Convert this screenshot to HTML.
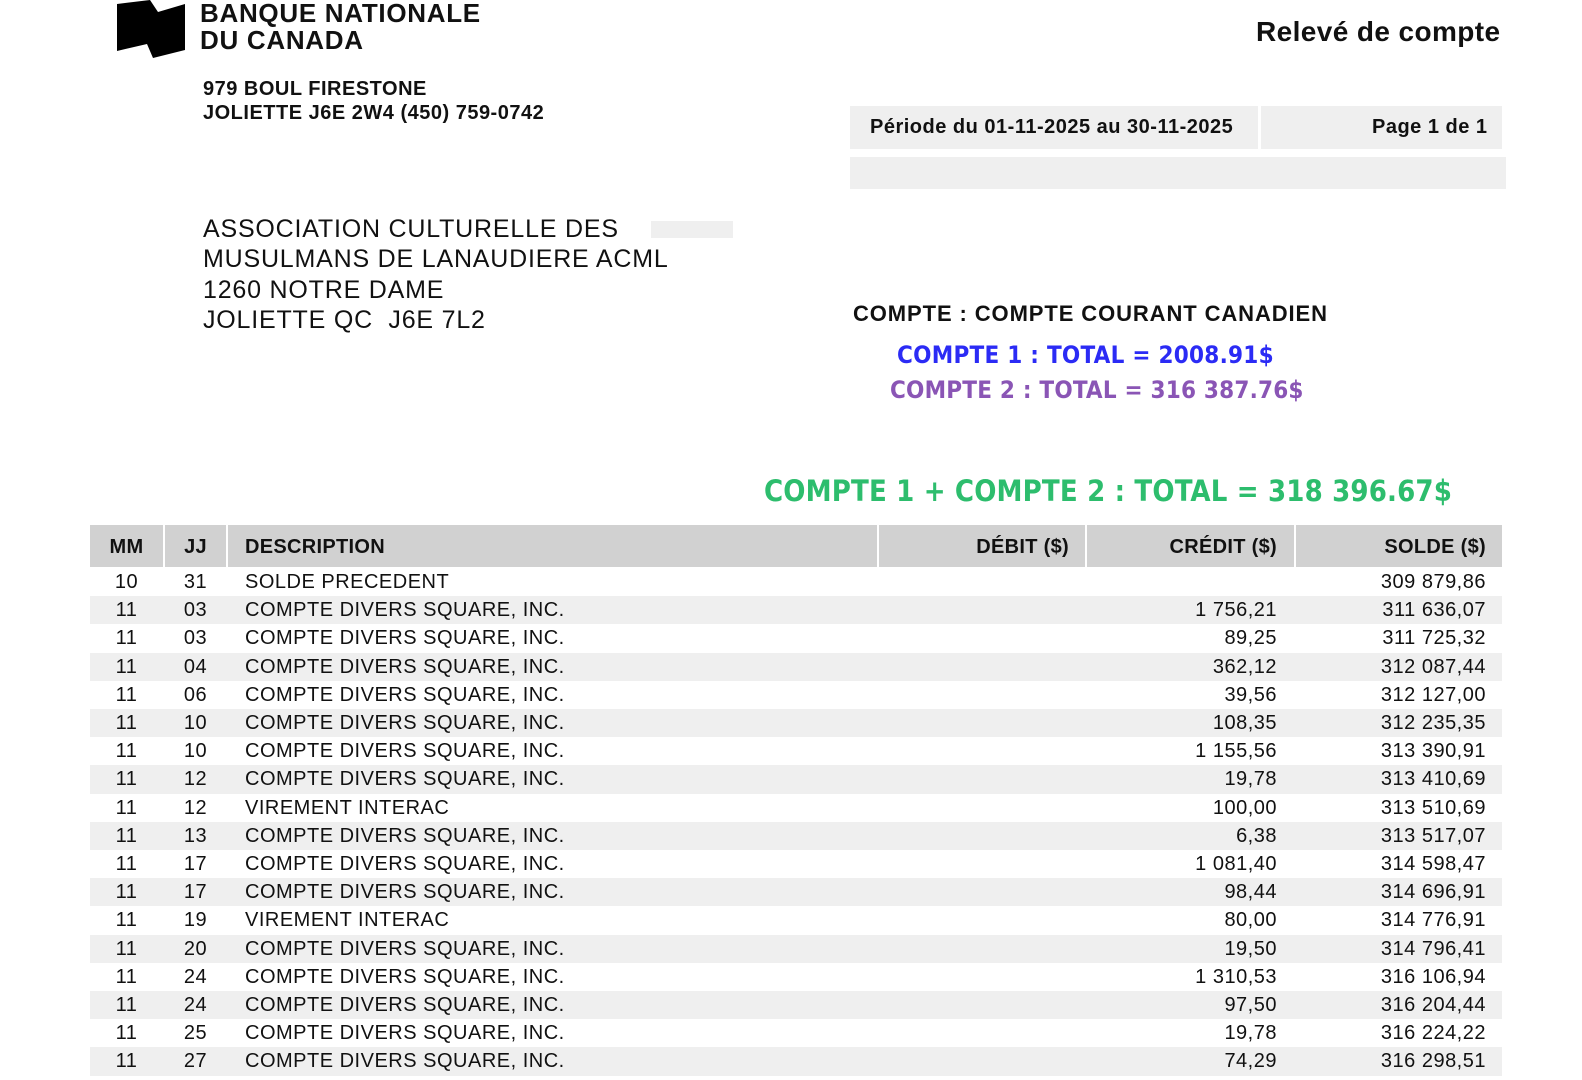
<!DOCTYPE html>
<html><head><meta charset="utf-8"><style>
body{margin:0;width:1582px;height:1080px;overflow:hidden;background:#fff;font-family:"Liberation Sans",Arial,sans-serif;color:#111;position:relative}
.a{position:absolute;white-space:nowrap}
.b{font-weight:bold}
.row{position:absolute;left:90px;width:1412px;height:28.2px;font-size:20px;line-height:28px;letter-spacing:0.5px}
.row span{position:absolute}
.g{background:#efefef}
.mm{left:0;width:73px;text-align:center}
.jj{left:75px;width:61px;text-align:center}
.ds{left:155px}
.cr{right:225px}
.so{right:16px}
.hd{position:absolute;top:525px;height:42px;background:#d1d1d1;font-weight:bold;font-size:20px;line-height:44px;letter-spacing:0.3px}
.tot{font-family:"DejaVu Sans Condensed","DejaVu Sans",sans-serif;font-weight:bold}
</style></head><body>
<svg class="a" style="left:0;top:0" width="200" height="70"><polygon points="117,4 150,0 158,12 185,4 185,50 153,58 147,44 117,51" fill="#000"/></svg>
<div class="a b" style="left:200px;top:0px;font-size:26px;line-height:27px;letter-spacing:0.7px">BANQUE NATIONALE<br>DU CANADA</div>
<div class="a b" style="left:203px;top:77px;font-size:20px;line-height:24px;letter-spacing:0.5px">979 BOUL FIRESTONE<br>JOLIETTE J6E 2W4 (450) 759-0742</div>
<div class="a b" style="left:1256px;top:16px;font-size:28px;letter-spacing:0.4px">Relevé de compte</div>
<div class="a" style="left:850px;top:106px;width:408px;height:43px;background:#efefef"></div>
<div class="a" style="left:1261px;top:106px;width:241px;height:43px;background:#efefef"></div>
<div class="a b" style="left:870px;top:116px;font-size:20px;letter-spacing:0.5px">Période du 01-11-2025 au 30-11-2025</div>
<div class="a b" style="left:1372px;top:116px;font-size:20px;letter-spacing:0.5px">Page 1 de 1</div>
<div class="a" style="left:850px;top:157px;width:656px;height:32px;background:#efefef"></div>
<div class="a" style="left:651px;top:221px;width:82px;height:17px;background:#efefef"></div>
<div class="a" style="left:203px;top:214px;font-size:25px;line-height:30.3px;letter-spacing:0.8px">ASSOCIATION CULTURELLE DES<br>MUSULMANS DE LANAUDIERE ACML<br>1260 NOTRE DAME<br>JOLIETTE QC&nbsp; J6E 7L2</div>
<div class="a b" style="left:853px;top:301px;font-size:22px;letter-spacing:0.9px">COMPTE : COMPTE COURANT CANADIEN</div>
<div class="a tot" style="left:897px;top:341px;font-size:24px;color:#2b2bf5;letter-spacing:0.25px">COMPTE 1 : TOTAL = 2008.91$</div>
<div class="a tot" style="left:890px;top:376px;font-size:24px;color:#8a55b5;letter-spacing:0.2px">COMPTE 2 : TOTAL = 316 387.76$</div>
<div class="a tot" style="left:764px;top:474px;font-size:29px;color:#2dbd6d;letter-spacing:0.15px">COMPTE 1 + COMPTE 2 : TOTAL = 318 396.67$</div>
<div class="hd" style="left:90px;width:73px;text-align:center">MM</div>
<div class="hd" style="left:165px;width:61px;text-align:center">JJ</div>
<div class="hd" style="left:228px;width:649px"><span style="padding-left:17px">DESCRIPTION</span></div>
<div class="hd" style="left:879px;width:206px;text-align:right"><span style="padding-right:16px">DÉBIT ($)</span></div>
<div class="hd" style="left:1087px;width:207px;text-align:right"><span style="padding-right:17px">CRÉDIT ($)</span></div>
<div class="hd" style="left:1296px;width:206px;text-align:right"><span style="padding-right:16px">SOLDE ($)</span></div>
<div class="row" style="top:568px"><span class="mm">10</span><span class="jj">31</span><span class="ds">SOLDE PRECEDENT</span><span class="so">309 879,86</span></div>
<div class="row g" style="top:596.2px"><span class="mm">11</span><span class="jj">03</span><span class="ds">COMPTE DIVERS SQUARE, INC.</span><span class="cr">1 756,21</span><span class="so">311 636,07</span></div>
<div class="row" style="top:624.4px"><span class="mm">11</span><span class="jj">03</span><span class="ds">COMPTE DIVERS SQUARE, INC.</span><span class="cr">89,25</span><span class="so">311 725,32</span></div>
<div class="row g" style="top:652.6px"><span class="mm">11</span><span class="jj">04</span><span class="ds">COMPTE DIVERS SQUARE, INC.</span><span class="cr">362,12</span><span class="so">312 087,44</span></div>
<div class="row" style="top:680.8px"><span class="mm">11</span><span class="jj">06</span><span class="ds">COMPTE DIVERS SQUARE, INC.</span><span class="cr">39,56</span><span class="so">312 127,00</span></div>
<div class="row g" style="top:709px"><span class="mm">11</span><span class="jj">10</span><span class="ds">COMPTE DIVERS SQUARE, INC.</span><span class="cr">108,35</span><span class="so">312 235,35</span></div>
<div class="row" style="top:737.2px"><span class="mm">11</span><span class="jj">10</span><span class="ds">COMPTE DIVERS SQUARE, INC.</span><span class="cr">1 155,56</span><span class="so">313 390,91</span></div>
<div class="row g" style="top:765.4px"><span class="mm">11</span><span class="jj">12</span><span class="ds">COMPTE DIVERS SQUARE, INC.</span><span class="cr">19,78</span><span class="so">313 410,69</span></div>
<div class="row" style="top:793.6px"><span class="mm">11</span><span class="jj">12</span><span class="ds">VIREMENT INTERAC</span><span class="cr">100,00</span><span class="so">313 510,69</span></div>
<div class="row g" style="top:821.8px"><span class="mm">11</span><span class="jj">13</span><span class="ds">COMPTE DIVERS SQUARE, INC.</span><span class="cr">6,38</span><span class="so">313 517,07</span></div>
<div class="row" style="top:850px"><span class="mm">11</span><span class="jj">17</span><span class="ds">COMPTE DIVERS SQUARE, INC.</span><span class="cr">1 081,40</span><span class="so">314 598,47</span></div>
<div class="row g" style="top:878.2px"><span class="mm">11</span><span class="jj">17</span><span class="ds">COMPTE DIVERS SQUARE, INC.</span><span class="cr">98,44</span><span class="so">314 696,91</span></div>
<div class="row" style="top:906.4px"><span class="mm">11</span><span class="jj">19</span><span class="ds">VIREMENT INTERAC</span><span class="cr">80,00</span><span class="so">314 776,91</span></div>
<div class="row g" style="top:934.6px"><span class="mm">11</span><span class="jj">20</span><span class="ds">COMPTE DIVERS SQUARE, INC.</span><span class="cr">19,50</span><span class="so">314 796,41</span></div>
<div class="row" style="top:962.8px"><span class="mm">11</span><span class="jj">24</span><span class="ds">COMPTE DIVERS SQUARE, INC.</span><span class="cr">1 310,53</span><span class="so">316 106,94</span></div>
<div class="row g" style="top:991px"><span class="mm">11</span><span class="jj">24</span><span class="ds">COMPTE DIVERS SQUARE, INC.</span><span class="cr">97,50</span><span class="so">316 204,44</span></div>
<div class="row" style="top:1019.2px"><span class="mm">11</span><span class="jj">25</span><span class="ds">COMPTE DIVERS SQUARE, INC.</span><span class="cr">19,78</span><span class="so">316 224,22</span></div>
<div class="row g" style="top:1047.4px"><span class="mm">11</span><span class="jj">27</span><span class="ds">COMPTE DIVERS SQUARE, INC.</span><span class="cr">74,29</span><span class="so">316 298,51</span></div>
</body></html>
